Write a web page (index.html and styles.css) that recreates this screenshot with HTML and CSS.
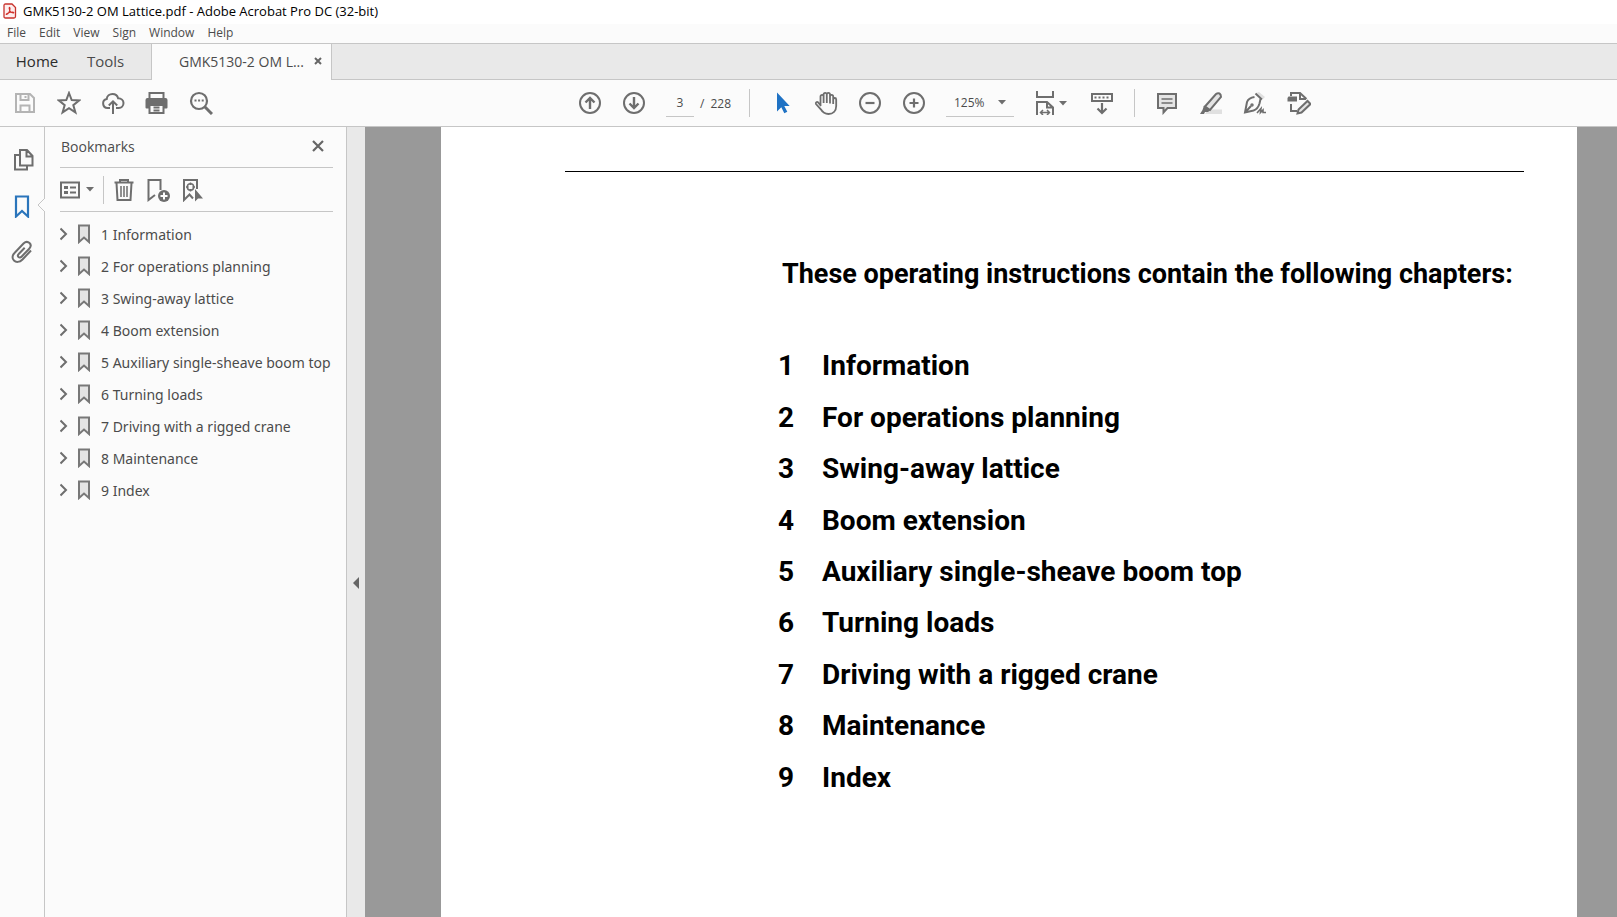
FILE: index.html
```html
<!DOCTYPE html>
<html lang="en">
<head>
    <meta charset="UTF-8">
    <meta name="viewport" content="width=device-width, initial-scale=1.0">
    <title>GMK5130-2 OM Lattice.pdf - Adobe Acrobat Pro DC (32-bit)</title>
    <link rel="stylesheet" href="styles.css">
</head>
<body>
    <svg class="defs" aria-hidden="true">
        <symbol id="i-mark" viewBox="0 0 14 20">
            <path d="M2 1.5h10v16.5l-5-4.500-5 4.500z" fill="#e4e4e4" stroke="#787878" stroke-width="2"/>
        </symbol>
        <symbol id="i-chevron" viewBox="0 0 8 14">
            <path d="M0.500 1.500L6 7l-5.500 5.500" fill="none" stroke="#6e6e6e" stroke-width="2"/>
        </symbol>
        <symbol id="i-caret" viewBox="0 0 8 5">
            <path d="M0 0h8L4 4.600z" fill="#6e6e6e"/>
        </symbol>
    </svg>

    <header class="titlebar">
        <svg class="app-icon" viewBox="0 0 14 16">
            <path d="M2.500 1h6.500l3.500 3.500v9q0 1.500-1.500 1.500h-8.500q-1.500 0-1.500-1.500v-11q0-1.500 1.500-1.500z" fill="#fdeeee" stroke="#c8322c" stroke-width="1.300"/>
            <path d="M3.500 11.500c2-.5 3.500-3.500 3.500-6 0-1.500-1-1.500-.8 0 .3 2.500 2 4.300 4 4.500 1 0 .8-1-.7-1-2 0-4.500.8-5.700 1.700-.8.600-.7 1 -.3.800z" fill="none" stroke="#d0302a" stroke-width="1.100"/>
        </svg>
        <h1 class="app-title">GMK5130-2 OM Lattice.pdf - Adobe Acrobat Pro DC (32-bit)</h1>
    </header>

    <nav class="menubar">
        <button>File</button>
        <button>Edit</button>
        <button>View</button>
        <button>Sign</button>
        <button>Window</button>
        <button>Help</button>
    </nav>

    <div class="tabs">
        <button class="tab tab-home">Home</button>
        <button class="tab tab-tools">Tools</button>
        <div class="tab-doc">
            <span>GMK5130-2 OM L...</span>
            <button class="tab-close" aria-label="Close tab">
                <svg width="8" height="8" viewBox="0 0 8 8"><path d="M1 1l6 6M7 1l-6 6" fill="none" stroke="#666" stroke-width="2"/></svg>
            </button>
        </div>
    </div>

    <div class="toolbar">
        <button class="tool" aria-label="Save">
            <svg class="icon faded" viewBox="0 0 24 24"><path d="M3 3h14l4 4v14H3zM7.500 3v6h8V3M7.500 21v-6.500h9V21"/><path d="M12.500 5v2"/></svg>
        </button>
        <button class="tool" aria-label="Star">
            <svg class="icon" viewBox="0 0 24 24"><path d="M12 2l2.700 7.100 7.600.300-6 4.700 2.100 7.300-6.400-4.200-6.400 4.200 2.100-7.300-6-4.700 7.600-.300z"/></svg>
        </button>
        <button class="tool" aria-label="Upload to cloud">
            <svg class="icon" viewBox="0 0 24 24"><path d="M9 17H6.500a4.500 4.500 0 0 1-.8-8.900c.3-3.200 2.900-5.100 5.800-5.100 2.800 0 5 1.700 5.600 4.300 3.200 0 5.400 2 5.400 4.800 0 2.900-2.100 4.900-4.700 4.900H15M12 23V11M7.800 14.500L12 10.300l4.200 4.200"/></svg>
        </button>
        <button class="tool" aria-label="Print">
            <svg class="icon" viewBox="0 0 24 24"><path class="solid" d="M2.500 7h18q2 0 2 2v7.500q0 1-1 1h-3v-3.500H4.500v3.500H1.500q-1 0-1-1V9q0-2 2-2z"/><path d="M4.500 8V2h14v6M4.500 14h14v8h-14zM8.500 16.500h6M8.500 19.500h6"/></svg>
        </button>
        <button class="tool" aria-label="Find text">
            <svg class="icon" viewBox="0 0 24 24"><circle cx="10" cy="10" r="8" stroke-width="2.200"/><path d="M16 16l7 7" stroke-width="3"/><path d="M5.500 9.500h2M9.100 9.500h2M12.700 9.500h2"/></svg>
        </button>

        <div class="toolbar-main">
            <button class="tool" aria-label="Previous page">
                <svg class="icon" viewBox="0 0 24 24"><circle cx="12" cy="12" r="10"/><path d="M12 18V7M7.500 11.500L12 7l4.500 4.500" stroke-width="2.400"/></svg>
            </button>
            <button class="tool" aria-label="Next page">
                <svg class="icon" viewBox="0 0 24 24"><circle cx="12" cy="12" r="10"/><path d="M12 6v11M7.500 12.500L12 17l4.500-4.500" stroke-width="2.400"/></svg>
            </button>
            <label class="pager">
                <input type="text" value="3" aria-label="Page number">
                <span>/</span><span>228</span>
            </label>
            <span class="divider"></span>
            <button class="tool" aria-label="Select">
                <svg class="icon" viewBox="0 0 24 24"><path class="blue" d="M7 1.500v19l4.300-4.200 3 6 3-1.500-3-5.800h5.400z"/></svg>
            </button>
            <button class="tool" aria-label="Pan">
                <svg class="icon" viewBox="0 0 24 24"><path stroke-width="1.800" d="M6.500 14V5.500a1.500 1.500 0 0 1 3.100 0V12 3.500a1.500 1.500 0 0 1 3.200 0V12 3.500a1.500 1.500 0 0 1 3.200 0V12.500 5.500a1.500 1.500 0 0 1 3.200 0V13 8.500a1.500 1.500 0 0 1 3 0V15c0 5-3.200 8-7.700 8-4 0-6-1.800-7.700-4.700L2 13c-.8-1.700 1-2.700 2.200-1.500L7 15"/></svg>
            </button>
            <button class="tool" aria-label="Zoom out">
                <svg class="icon" viewBox="0 0 24 24"><circle cx="12" cy="12" r="10"/><path d="M7.500 12h9" stroke-width="2.200"/></svg>
            </button>
            <button class="tool" aria-label="Zoom in">
                <svg class="icon" viewBox="0 0 24 24"><circle cx="12" cy="12" r="10"/><path d="M7.500 12h9M12 7.500v9" stroke-width="2.200"/></svg>
            </button>
            <div class="zoom">
                <select aria-label="Zoom level"><option>125%</option></select>
                <svg class="caret"><use href="#i-caret"/></svg>
            </div>
            <button class="tool tool-wide" aria-label="Fit width">
                <svg class="icon" viewBox="0 0 24 24"><path d="M4 0v6h16V0M4 24V11h10l6 5.500V24M14 11v5.500h6"/><path d="M7.500 21.500h9M10 19l-2.500 2.500L10 24M14 19l2.500 2.500L14 24" stroke-width="1.500"/></svg>
                <svg class="caret"><use href="#i-caret"/></svg>
            </button>
            <button class="tool" aria-label="Scroll mode">
                <svg class="icon" viewBox="0 0 24 24"><path d="M2 3h20v7H2z"/><path d="M4.500 6.500h15" stroke-dasharray="2 2"/><path d="M12 12v10M7.500 17.500L12 22l4.500-4.500" stroke-width="2.200"/></svg>
            </button>
            <span class="divider"></span>
            <button class="tool" aria-label="Comment">
                <svg class="icon" viewBox="0 0 24 24"><path d="M3 3h18v14H12.500L8.500 21.500V17H3z" fill="#e4e4e4"/><path d="M6.500 8h11M6.500 12h11" stroke-width="1.500"/></svg>
            </button>
            <button class="tool" aria-label="Highlight">
                <svg class="icon" viewBox="0 0 24 24"><path d="M9 18.500h14V23H6z" fill="#e0e0e0" stroke="none"/><path d="M6 15.500L17 3q1.500-1 3.500-.5 1.500.8 1.500 3.500L11 19z" fill="#e4e4e4"/><path class="solid" d="M5 14.500l6.500 4.500-2.500 2H6l-1 2H1l2.500-4z"/></svg>
            </button>
            <button class="tool" aria-label="Sign">
                <svg class="icon" viewBox="0 0 24 24"><path d="M13.500 2l6.500 6 2-2-6-5z" fill="#e0e0e0" stroke="none"/><path d="M12.500 2.500l6.500 6M11.500 6q-6 1-7.500 5L2 21.500l8.500-2q4.500-1.500 6-7L17.500 8M2 21.500l6-6.500"/><circle cx="9" cy="14" r="1" stroke-width="1.500"/><path stroke-width="1.600" d="M14 22l4-4.500-.5 4 2.500-2.500v2.500h3"/></svg>
            </button>
            <button class="tool" aria-label="Edit PDF">
                <svg class="icon" viewBox="0 0 24 24"><path d="M4 5V2h9l6.500 6M13 2v6h6M4 13v7h6"/><path class="solid" d="M1.500 5.500h8.500v5h-9.500v-3.500z"/><path d="M10.500 22.500l1-4L20.500 10l3 3-9 8.500z" fill="#e4e4e4"/></svg>
            </button>
        </div>
    </div>

    <main class="workspace">
        <nav class="rail">
            <button aria-label="Page thumbnails">
                <svg class="icon" viewBox="0 0 24 24"><path d="M9 2h7l5.500 6v9.500H9zM15.500 2v6.500H21.500M9 7H4v14.500h12v-4"/></svg>
            </button>
            <button class="active" aria-label="Bookmarks">
                <svg class="icon" viewBox="0 0 24 24"><path stroke="#2a75bb" d="M5 2.500h12v20L11 17 5 22.500z" stroke-width="2.200"/></svg>
                <svg class="notch" viewBox="0 0 8 14"><path d="M8 0L1 7l7 7" fill="#fbfbfb" stroke="#c6c6c6"/></svg>
            </button>
            <button aria-label="Attachments">
                <svg class="icon" viewBox="0 0 24 24"><path d="M20 10.500l-8.500 9c-3 3-6.500 3-8.500 1s-2-5 .5-7.500l9-9.500c2-2 4.500-2 6-.5s1.500 3.800-.3 5.700l-7.700 8c-1 1-2.300 1-3 .3s-.8-2 .2-3l6-6.300"/></svg>
            </button>
        </nav>

        <aside class="panel">
            <div class="panel-head">
                <h2>Bookmarks</h2>
                <button aria-label="Close panel">
                    <svg width="12" height="12" viewBox="0 0 12 12"><path d="M1 1l10 10M11 1L1 11" fill="none" stroke="#666" stroke-width="2.200"/></svg>
                </button>
            </div>
            <div class="panel-tools">
                <button class="options" aria-label="Options">
                    <svg width="20" height="18" viewBox="0 0 20 18"><path d="M1 1.500h18v15H1z" fill="none" stroke="#6e6e6e" stroke-width="2"/><path d="M10 6.500h6M10 11.500h6" stroke="#6e6e6e" stroke-width="2"/><path fill="#6e6e6e" d="M4 5h4v3H4zM4 10h4v3H4z"/></svg>
                    <svg class="caret"><use href="#i-caret"/></svg>
                </button>
                <span class="divider"></span>
                <button aria-label="Delete bookmark">
                    <svg class="icon" viewBox="0 0 24 24"><path d="M1.500 4.500h19M3.500 5l1 17h13l1-17M7 4V2h8v2"/><path d="M8 8v11M11 8v11M14 8v11" stroke-width="1.500"/></svg>
                </button>
                <button aria-label="New bookmark">
                    <svg class="icon" viewBox="0 0 24 24"><path d="M9 17l-6.500 5V2h12v10"/><circle class="solid" cx="18" cy="18" r="6"/><path d="M18 14.500v7M14.500 18h7" stroke="#fff"/></svg>
                </button>
                <button aria-label="Find current bookmark">
                    <svg class="icon" viewBox="0 0 24 24"><path d="M14 20.500L10.500 16.500 5 22V2h13v9"/><circle cx="11.500" cy="9" r="3.200" stroke-width="1.500"/><path d="M11.500 4.500v2.500M11.500 11v2.500M7 9h2.500M13.500 9h2.500" stroke-width="1.500"/><path class="solid" d="M16 11v12.500l3-3h5z"/></svg>
                </button>
            </div>
            <ul class="bookmarks">
                <li><svg class="chevron"><use href="#i-chevron"/></svg><svg class="mark"><use href="#i-mark"/></svg><a href="#c1">1 Information</a></li>
                <li><svg class="chevron"><use href="#i-chevron"/></svg><svg class="mark"><use href="#i-mark"/></svg><a href="#c2">2 For operations planning</a></li>
                <li><svg class="chevron"><use href="#i-chevron"/></svg><svg class="mark"><use href="#i-mark"/></svg><a href="#c3">3 Swing-away lattice</a></li>
                <li><svg class="chevron"><use href="#i-chevron"/></svg><svg class="mark"><use href="#i-mark"/></svg><a href="#c4">4 Boom extension</a></li>
                <li><svg class="chevron"><use href="#i-chevron"/></svg><svg class="mark"><use href="#i-mark"/></svg><a href="#c5">5 Auxiliary single-sheave boom top</a></li>
                <li><svg class="chevron"><use href="#i-chevron"/></svg><svg class="mark"><use href="#i-mark"/></svg><a href="#c6">6 Turning loads</a></li>
                <li><svg class="chevron"><use href="#i-chevron"/></svg><svg class="mark"><use href="#i-mark"/></svg><a href="#c7">7 Driving with a rigged crane</a></li>
                <li><svg class="chevron"><use href="#i-chevron"/></svg><svg class="mark"><use href="#i-mark"/></svg><a href="#c8">8 Maintenance</a></li>
                <li><svg class="chevron"><use href="#i-chevron"/></svg><svg class="mark"><use href="#i-mark"/></svg><a href="#c9">9 Index</a></li>
            </ul>
        </aside>

        <button class="collapse" aria-label="Collapse panel">
            <svg width="6" height="12" viewBox="0 0 6 12"><path d="M6 0v12L0 6z" fill="#666"/></svg>
        </button>

        <section class="viewer">
            <article class="page">
                <hr>
                <h2>These operating instructions contain the following chapters:</h2>
                <ol class="chapters">
                    <li id="c1"><span>1</span>Information</li>
                    <li id="c2"><span>2</span>For operations planning</li>
                    <li id="c3"><span>3</span>Swing-away lattice</li>
                    <li id="c4"><span>4</span>Boom extension</li>
                    <li id="c5"><span>5</span>Auxiliary single-sheave boom top</li>
                    <li id="c6"><span>6</span>Turning loads</li>
                    <li id="c7"><span>7</span>Driving with a rigged crane</li>
                    <li id="c8"><span>8</span>Maintenance</li>
                    <li id="c9"><span>9</span>Index</li>
                </ol>
            </article>
        </section>
    </main>
</body>
</html>
```
FILE: styles.css
```css
* {
    box-sizing: border-box;
}
body {
    margin: 0;
    height: 100vh;
    display: flex;
    flex-direction: column;
    overflow: hidden;
    background-color: #fbfbfb;
    color: #4b4b4b;
    font-family: "Open Sans", "Noto Sans", sans-serif;
    font-size: 14px;
}
button, input, select {
    font: inherit;
    color: inherit;
    background: none;
    border: none;
    border-radius: 0;
    margin: 0;
    padding: 0;
}
button { cursor: pointer; }
h1, h2, ul, ol {
    margin: 0;
    padding: 0;
    font-weight: normal;
}
ul, ol { list-style: none; }
svg {
    display: block;
    flex: none;
}
.defs {
    position: absolute;
    width: 0;
    height: 0;
}

/* icons */
.icon {
    width: 24px;
    height: 24px;
    fill: none;
    stroke: #6e6e6e;
    stroke-width: 2;
}
.icon .solid { fill: #6e6e6e; stroke: none; }
.icon .blue { fill: #1f72c4; stroke: none; }
.icon.faded { stroke: #b4b4b4; }
.caret { width: 8px; height: 5px; }
.divider {
    width: 1px;
    height: 28px;
    background-color: #c6c6c6;
}

/* title and menu */
.titlebar {
    display: flex;
    align-items: center;
    gap: 6px;
    height: 24px;
    padding: 0 3px 2px;
    background-color: white;
}
.app-icon { width: 14px; height: 16px; }
.app-title {
    font-size: 13px;
    color: black;
}
.menubar {
    display: flex;
    gap: 13px;
    height: 19px;
    padding: 0 7px 2px;
    font-size: 12px;
}

/* tabs */
.tabs {
    display: flex;
    height: 37px;
    border-top: 1px solid #c6c6c6;
    background-color: #e9e9e9;
    box-shadow: inset 0 -1px #c6c6c6;
}
.tab {
    padding-bottom: 2px;
    font-size: 15px;
}
.tab-home {
    width: 72px;
    padding-left: 2px;
    color: #2c2c2c;
}
.tab-tools {
    width: 79px;
    padding-right: 12px;
}
.tab-doc {
    display: flex;
    align-items: center;
    justify-content: space-between;
    width: 181px;
    padding: 0 9px 2px 27px;
    border: solid #c6c6c6;
    border-width: 0 1px;
    background-color: #fbfbfb;
}

/* toolbar */
.toolbar {
    display: flex;
    height: 47px;
    padding-left: 3px;
    border-bottom: 1px solid #c6c6c6;
}
.toolbar-main {
    display: flex;
    align-items: center;
    margin-left: 345px;
}
.tool {
    display: flex;
    align-items: center;
    justify-content: center;
    width: 44px;
    height: 46px;
}
.tool-wide {
    width: 52px;
    margin-right: 4px;
    gap: 2px;
}
.toolbar .divider { margin: 0 10px; }
.pager {
    display: flex;
    align-items: center;
    gap: 6px;
    width: 83px;
    padding-left: 10px;
    font-size: 12px;
}
.pager input {
    width: 28px;
    height: 28px;
    text-align: center;
    border-bottom: 1px solid #c6c6c6;
}
.zoom {
    display: flex;
    align-items: center;
    width: 68px;
    height: 28px;
    margin: 0 10px;
    border-bottom: 1px solid #c6c6c6;
    font-size: 12px;
}
.zoom select {
    appearance: none;
    width: 52px;
    padding-left: 8px;
}

/* side rail */
.workspace {
    display: flex;
    flex: 1;
    min-height: 0;
}
.rail {
    display: flex;
    flex: none;
    flex-direction: column;
    width: 45px;
    padding-top: 10px;
    border-right: 1px solid #c6c6c6;
}
.rail button {
    display: flex;
    align-items: center;
    height: 46px;
    padding-left: 11px;
    position: relative;
}
.notch {
    position: absolute;
    right: -1px;
    top: 15px;
    width: 8px;
    height: 14px;
}

/* bookmarks panel */
.panel {
    flex: none;
    width: 302px;
    padding-left: 15px;
    border-right: 1px solid #c6c6c6;
}
.panel-head, .panel-tools {
    display: flex;
    align-items: center;
    width: 273px;
    border-bottom: 1px solid #c6c6c6;
}
.panel-head {
    justify-content: space-between;
    height: 41px;
    padding: 0 9px 2px 1px;
}
.panel-head h2 { font-size: 14px; }
.panel-tools {
    height: 44px;
    gap: 9px;
}
.options {
    display: flex;
    align-items: center;
    gap: 6px;
}
.bookmarks {
    padding-top: 6px;
    font-family: "Noto Sans", "Open Sans", sans-serif;
}
.bookmarks li {
    display: flex;
    align-items: center;
    height: 32px;
    white-space: nowrap;
}
.bookmarks a {
    color: inherit;
    text-decoration: none;
}
.chevron {
    width: 8px;
    height: 14px;
    margin-right: 9px;
}
.mark {
    width: 14px;
    height: 20px;
    margin-right: 10px;
}
.collapse {
    display: flex;
    flex: none;
    align-items: center;
    justify-content: center;
    width: 18px;
    padding-top: 122px;
    background-color: #e9e9e9;
}

/* document */
.viewer {
    display: flex;
    flex: 1;
    min-width: 0;
    padding: 0 40px 0 76px;
    background-color: #999;
}
.page {
    flex: 1;
    min-width: 0;
    padding: 44px 53px 0 124px;
    background-color: white;
    color: black;
    font-family: Roboto, "Liberation Sans", sans-serif;
}
.page hr {
    margin: 0;
    border: none;
    border-top: 1px solid black;
}
.page h2 {
    margin: 86px 0 0 217px;
    font-size: 27px;
    line-height: 32px;
    font-weight: bold;
    white-space: nowrap;
}
.chapters {
    display: grid;
    grid-auto-rows: 1fr;
    height: 463px;
    margin: 50px 0 0 213px;
    font-size: 28px;
    font-weight: bold;
}
.chapters li {
    display: flex;
    align-items: center;
}
.chapters span { width: 44px; }
```
